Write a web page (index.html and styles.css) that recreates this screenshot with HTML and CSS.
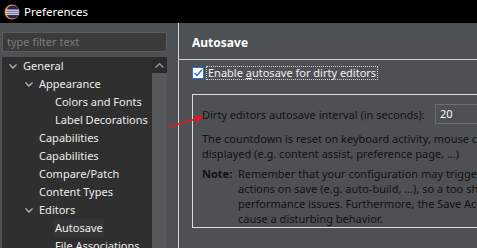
FILE: index.html
```
<!DOCTYPE html>
<html>
<head>
  <title>Preferences</title>
  <link rel="stylesheet" href="styles.css">
</head>
<body>
  <div class="titlebar">
    <svg class="app-icon" width="16" height="16" viewBox="0 0 16 16">
      <circle cx="8" cy="8" r="7.5" fill="#f09a2a"/>
      <circle cx="8.8" cy="8" r="6.6" fill="#2c2260"/>
      <rect x="2" y="5.6" width="13" height="1.2" fill="#f4f4f4"/>
      <rect x="2" y="7.6" width="13" height="1.2" fill="#f4f4f4"/>
      <rect x="2" y="9.6" width="13" height="1.2" fill="#f4f4f4"/>
    </svg>
    <span class="title">Preferences</span>
  </div>

  <div class="window">
    <div class="sidebar">
      <div class="filter">type filter text</div>
      <div class="tree-box">
        <ul class="tree">
          <li class="row lvl0"><span class="twisty"><svg width="8" height="5" viewBox="0 0 8 5"><path d="M0.5 0.5 L4 4 L7.5 0.5" fill="none" stroke="#b8b8b8" stroke-width="1.3"/></svg></span>General</li>
          <li class="row lvl1"><span class="twisty"><svg width="8" height="5" viewBox="0 0 8 5"><path d="M0.5 0.5 L4 4 L7.5 0.5" fill="none" stroke="#b8b8b8" stroke-width="1.3"/></svg></span>Appearance</li>
          <li class="row lvl2"><span class="twisty"></span>Colors and Fonts</li>
          <li class="row lvl2"><span class="twisty"></span>Label Decorations</li>
          <li class="row lvl1"><span class="twisty"></span>Capabilities</li>
          <li class="row lvl1"><span class="twisty"></span>Capabilities</li>
          <li class="row lvl1"><span class="twisty"></span>Compare/Patch</li>
          <li class="row lvl1"><span class="twisty"></span>Content Types</li>
          <li class="row lvl1"><span class="twisty"><svg width="8" height="5" viewBox="0 0 8 5"><path d="M0.5 0.5 L4 4 L7.5 0.5" fill="none" stroke="#b8b8b8" stroke-width="1.3"/></svg></span>Editors</li>
          <li class="row lvl2 selected"><span class="twisty"></span><span class="sel">Autosave</span></li>
          <li class="row lvl2"><span class="twisty"></span>File Associations</li>
        </ul>
        <div class="scrollbar">
          <div class="scroll-up"><svg width="9" height="5" viewBox="0 0 9 5"><path d="M0.5 4.5 L4.5 0.8 L8.5 4.5" fill="none" stroke="#9a9a9a" stroke-width="1.4"/></svg></div>
        </div>
      </div>
    </div>

    <div class="page">
      <div class="page-header">Autosave</div>
      <div class="page-body">
        <div class="check-row">
          <span class="checkbox"><svg width="10" height="10" viewBox="0 0 10 10"><path d="M1.5 5 L4 7.5 L8.8 1.8" fill="none" stroke="#1f6fd8" stroke-width="1.5"/></svg></span>
          <span class="check-label">Enable <u>a</u>utosave for dirty editors</span>
        </div>
        <div class="group">
          <div class="field-row">
            <span class="field-label">Dirty editors autosave interval (in seconds):</span>
            <div class="field-input">20</div>
          </div>
          <p class="info">The countdown is reset on keyboard activity, mouse clicks, or if popups are<br>displayed (e.g. content assist, preference page, ...)</p>
          <div class="note">
            <span class="note-title">Note:</span>
            <p class="note-text">Remember that your configuration may trigger expensive<br>actions on save (e.g. auto-build, ...), so a too short interval may cause<br>performance issues. Furthermore, the Save Actions might<br>cause a disturbing behavior.</p>
          </div>
        </div>
      </div>
    </div>
  </div>

  <svg class="arrow" width="477" height="248" viewBox="0 0 477 248">
    <line x1="168" y1="127" x2="196" y2="119" stroke="#e8141c" stroke-width="1.6"/>
    <polygon points="204,116.5 194,115.5 196.5,122.5" fill="#e8141c"/>
  </svg>
</body>
</html>
```

FILE: styles.css
```
body {
  margin: 0;
  width: 477px;
  height: 248px;
  overflow: hidden;
  font-family: "Noto Sans", "Open Sans", sans-serif;
  font-size: 11px;
  background-color: #4d5154;
  position: relative;
}

.titlebar {
  height: 23px;
  background-color: #000;
  display: flex;
  align-items: center;
  padding-left: 4px;
}

.app-icon {
  margin-right: 4px;
}

.title {
  color: #fff;
  font-size: 11.5px;
}

.window {
  display: flex;
  height: 225px;
}

.sidebar {
  width: 179px;
  flex-shrink: 0;
  border-right: 1px solid #d4d4d4;
  padding: 9px 0 0 2px;
  box-sizing: border-box;
}

.filter {
  width: 165px;
  height: 20px;
  box-sizing: border-box;
  background-color: #3b3b3b;
  border: 1px solid #5c5c5c;
  color: #7c7c7c;
  padding-left: 4px;
  line-height: 18px;
}

.tree-box {
  display: flex;
  width: 165px;
  height: 200px;
  margin-top: 5px;
}

.tree {
  list-style: none;
  margin: 0;
  padding: 0;
  flex: 1;
  background-color: #2f2f2f;
  color: #ededed;
}

.row {
  height: 18px;
  line-height: 18px;
  display: flex;
  align-items: center;
  white-space: nowrap;
}

.lvl0 { padding-left: 5px; }
.lvl1 { padding-left: 21px; }
.lvl2 { padding-left: 37px; }

.twisty {
  width: 16px;
  display: flex;
  align-items: center;
  padding-left: 2px;
  box-sizing: border-box;
}

.sel {
  background-color: #353535;
  padding: 0 1px;
  margin-left: -1px;
}

.scrollbar {
  width: 15px;
  background-color: #575859;
}

.scroll-up {
  height: 16px;
  background-color: #2b2b2b;
  display: flex;
  justify-content: center;
  align-items: center;
}

.page {
  flex: 1;
  min-width: 0;
}

.page-header {
  height: 36px;
  line-height: 40px;
  padding-left: 13px;
  color: #fff;
  font-weight: bold;
  font-size: 12px;
  border-bottom: 1px solid #d0d0d0;
}

.page-body {
  padding: 7px 0 0 13px;
}

.check-row {
  display: flex;
  align-items: center;
  height: 12px;
}

.checkbox {
  width: 12px;
  height: 12px;
  box-sizing: border-box;
  background-color: #fff;
  border: 1px solid #2a72d8;
  display: flex;
  align-items: center;
  justify-content: center;
}

.check-label {
  margin-left: 3px;
  color: #f2f2f2;
  outline: 1px dotted #cfcfcf;
  line-height: 12px;
  padding: 0 1px;
}

.group {
  margin-top: 15px;
  width: 320px;
  height: 134px;
  border: 1px solid #dcdcdc;
  border-right: none;
  padding: 9px 0 0 9px;
  box-sizing: border-box;
  color: #111;
  white-space: nowrap;
}

.field-row {
  display: flex;
  align-items: center;
  height: 20px;
}

.field-label {
  width: 233px;
  flex-shrink: 0;
}

.field-input {
  width: 60px;
  flex-shrink: 0;
  height: 20px;
  box-sizing: border-box;
  border: 1px solid #6a6e71;
  color: #f4f4f4;
  padding-left: 4px;
  line-height: 18px;
}

.info {
  margin: 7px 0 0 0;
  line-height: 15px;
}

.note {
  display: flex;
  margin-top: 5px;
}

.note-title {
  font-weight: bold;
  width: 36px;
  flex-shrink: 0;
  line-height: 15px;
}

.note-text {
  margin: 0;
  line-height: 15px;
}

.arrow {
  position: absolute;
  left: 0;
  top: 0;
  pointer-events: none;
}
```
